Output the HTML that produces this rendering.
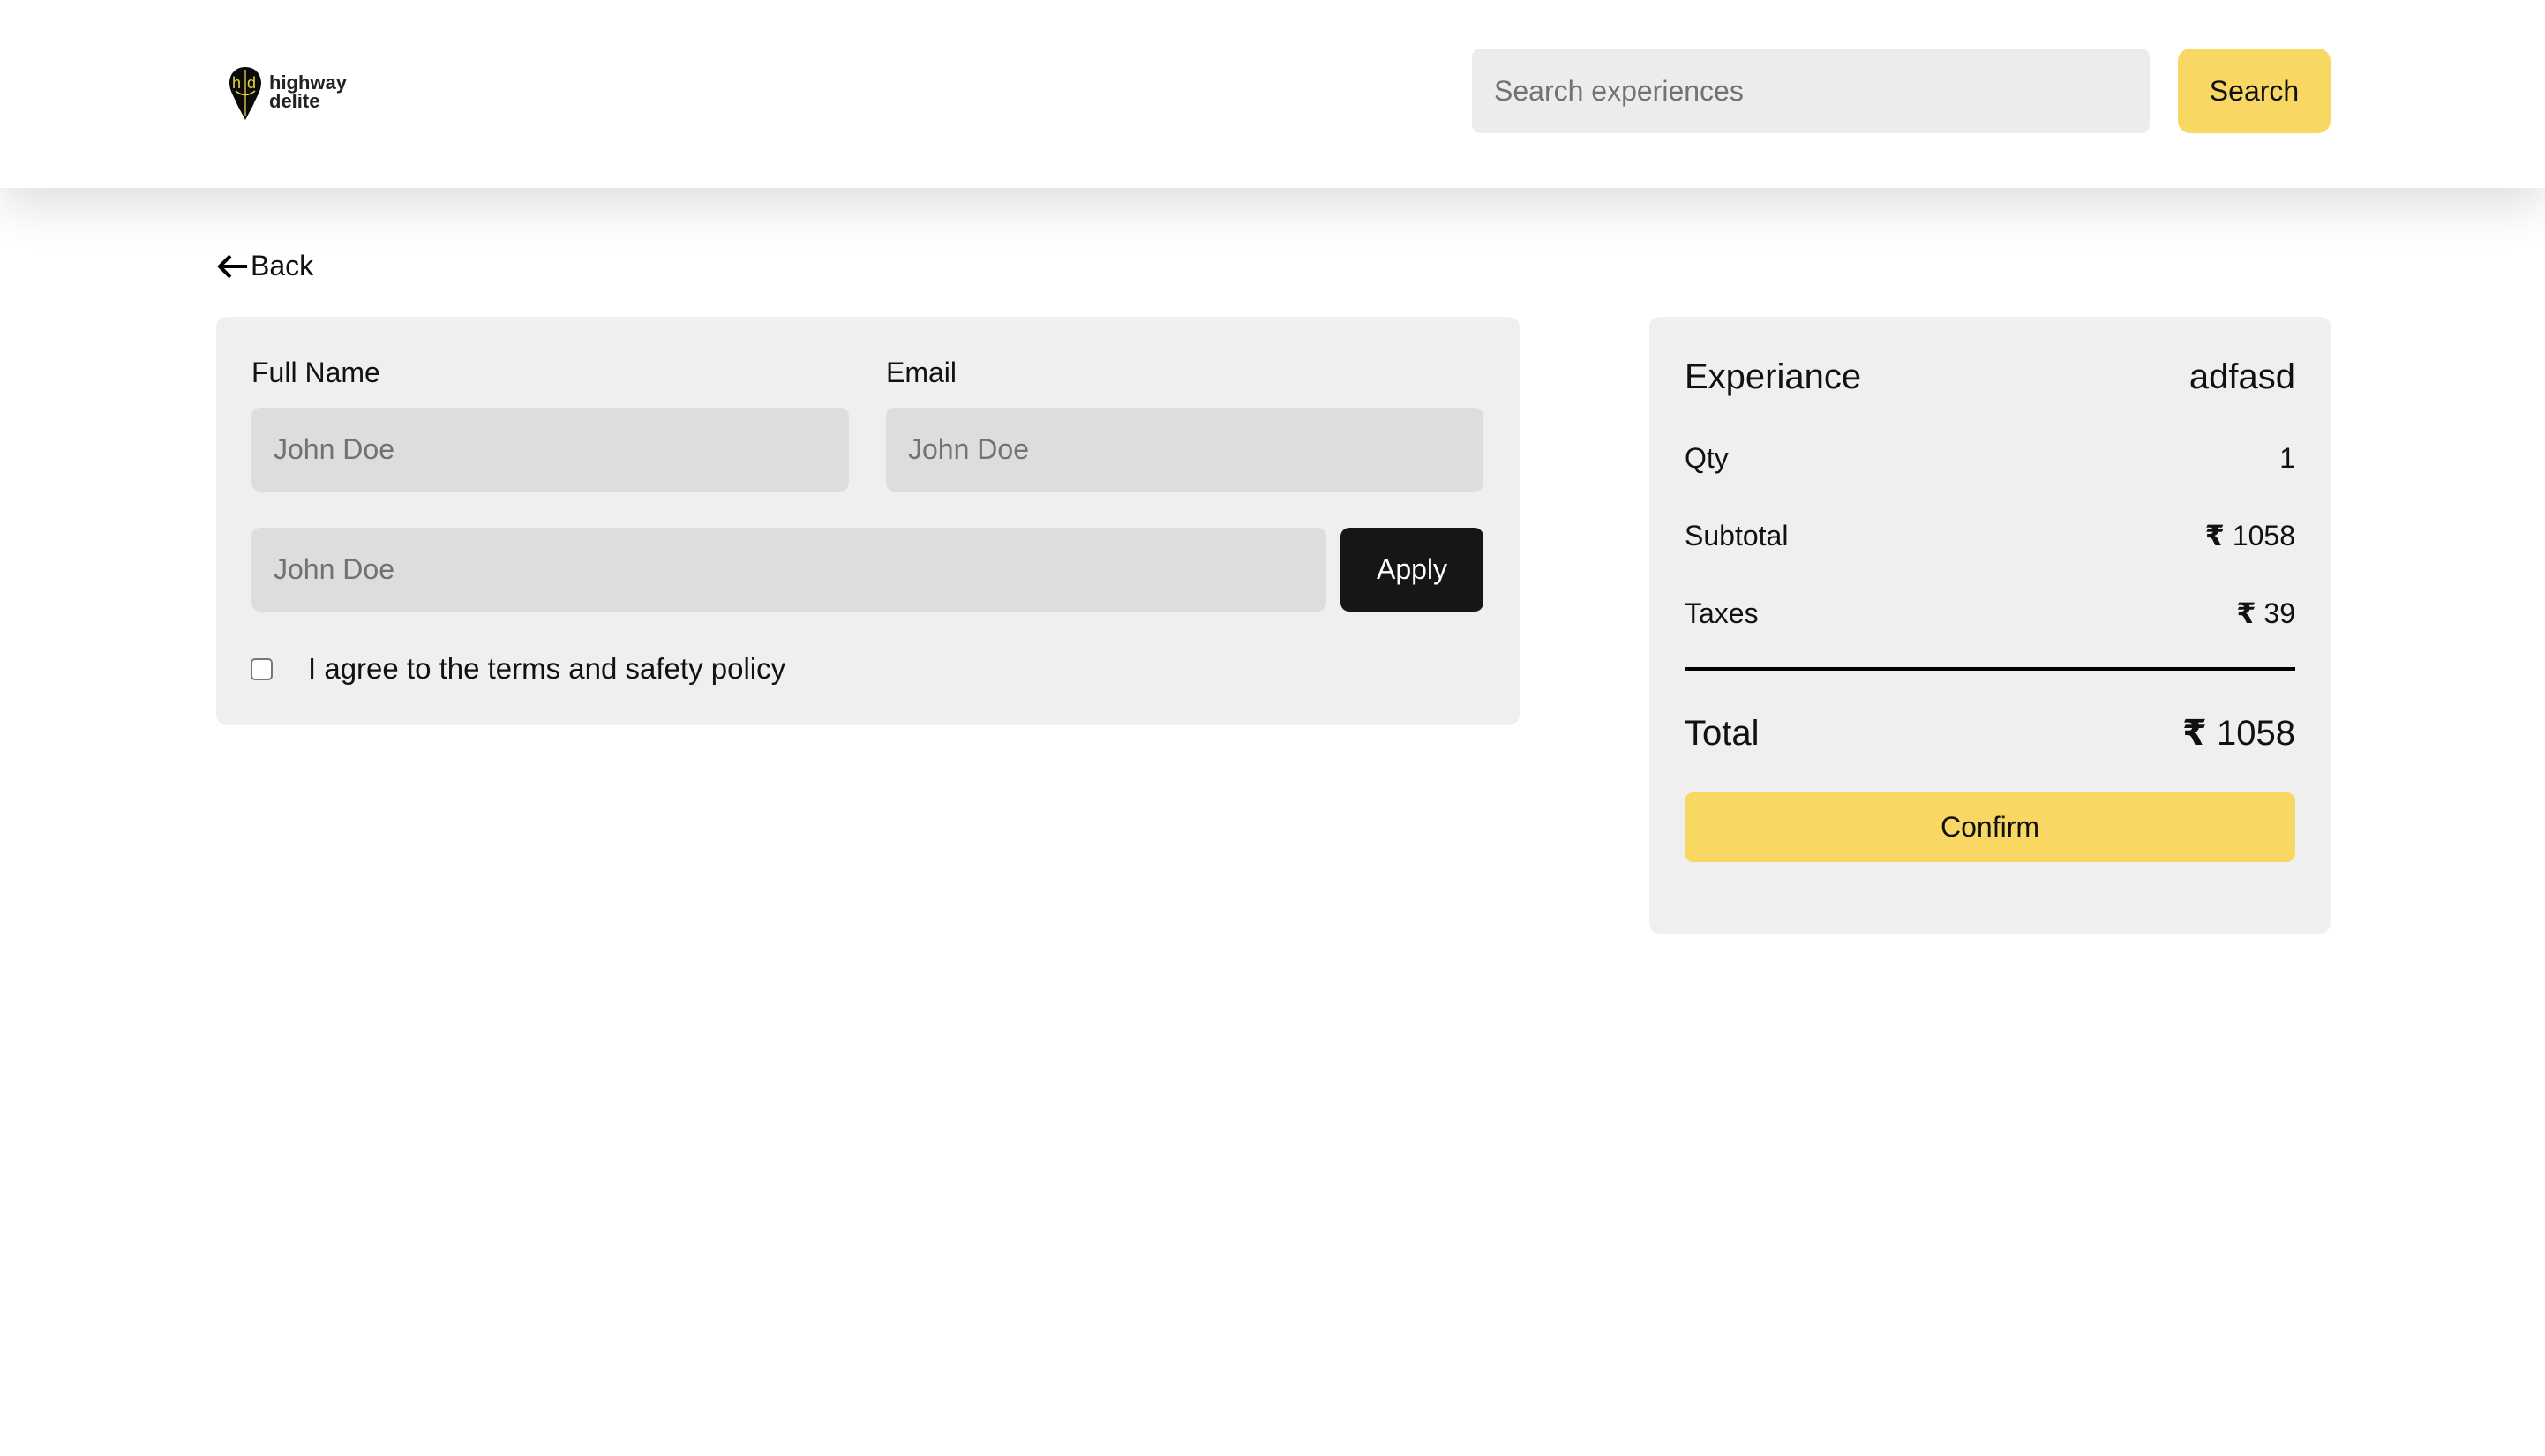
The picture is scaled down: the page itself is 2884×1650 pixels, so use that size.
<!DOCTYPE html>
<html><head><meta charset="utf-8"><style>
*{margin:0;padding:0;box-sizing:border-box}
body{width:2884px;height:1650px;background:#fff;font-family:"Liberation Sans","DejaVu Sans",sans-serif;color:#111;position:relative;overflow:hidden}
.abs{position:absolute}
.hdr{left:0;top:0;width:2884px;height:213px;background:#fff;box-shadow:0 20px 50px rgba(0,0,0,0.13);z-index:2}
.inp{background:#dddddd;border-radius:10px;color:#727272;font-size:32px;padding-left:25px;display:flex;align-items:center}
.lbl{font-size:32px;color:#111}
.row{left:1909px;width:692px;display:flex;justify-content:space-between;font-size:32px;align-items:center}
.r{font-weight:bold}
</style></head><body>
<div class="abs hdr">
  <svg class="abs" style="left:258px;top:75px" width="40" height="62" viewBox="0 0 40 62">
    <path d="M20 1C9 1 2 9 2 19c0 9 6 17 9 25l9 17 9-17c3-8 9-16 9-25C38 9 31 1 20 1z" fill="#0a0a0a"/>
    <line x1="20" y1="4" x2="20" y2="56" stroke="#c9b93a" stroke-width="1.5"/>
    <text x="5" y="25" font-size="18" fill="#e6d53f" font-family="Liberation Sans">h</text>
    <text x="22" y="25" font-size="18" fill="#e6d53f" font-family="Liberation Sans">d</text>
    <path d="M9 28q11 9 22 0" stroke="#e6d53f" stroke-width="1.5" fill="none"/>
  </svg>
  <div class="abs" style="left:305px;top:83px;font-size:22px;line-height:21px;font-weight:600;color:#222">highway<br>delite</div>
  <div class="abs inp" style="left:1668px;top:55px;width:768px;height:96px;background:#ececec">Search experiences</div>
  <div class="abs" style="left:2468px;top:55px;width:173px;height:96px;background:#f8d762;border-radius:14px;font-size:32px;display:flex;align-items:center;justify-content:center;color:#111">Search</div>
</div>
<div class="abs" style="left:246px;top:283px;font-size:32px;display:flex;align-items:center">
  <svg width="36" height="30" viewBox="0 0 36 30"><path d="M34 15H4M15 3L3 15l12 12" stroke="#000" stroke-width="4" fill="none"/></svg><span style="margin-left:2px">Back</span>
</div>
<div class="abs" style="left:245px;top:359px;width:1477px;height:463px;background:#efefef;border-radius:12px"></div>
<div class="abs lbl" style="left:285px;top:404px">Full Name</div>
<div class="abs lbl" style="left:1004px;top:404px">Email</div>
<div class="abs inp" style="left:285px;top:462px;width:677px;height:95px">John Doe</div>
<div class="abs inp" style="left:1004px;top:462px;width:677px;height:95px">John Doe</div>
<div class="abs inp" style="left:285px;top:598px;width:1218px;height:95px">John Doe</div>
<div class="abs" style="left:1519px;top:598px;width:162px;height:95px;background:#161616;border-radius:10px;color:#fff;font-size:32px;display:flex;align-items:center;justify-content:center">Apply</div>
<div class="abs" style="left:284px;top:746px;width:25px;height:25px;border:2px solid #777;border-radius:5px;background:#fff"></div>
<div class="abs" style="left:349px;top:739px;font-size:33px">I agree to the terms and safety policy</div>
<div class="abs" style="left:1869px;top:359px;width:772px;height:699px;background:#efefef;border-radius:12px"></div>
<div class="abs row" style="top:403px;font-size:40px;height:48px"><span>Experiance</span><span>adfasd</span></div>
<div class="abs row" style="top:500px;height:38px"><span>Qty</span><span>1</span></div>
<div class="abs row" style="top:588px;height:38px"><span>Subtotal</span><span><span class="r">₹</span> 1058</span></div>
<div class="abs row" style="top:676px;height:38px"><span>Taxes</span><span><span class="r">₹</span> 39</span></div>
<div class="abs" style="left:1909px;top:756px;width:692px;height:4px;background:#000"></div>
<div class="abs row" style="top:806px;font-size:40px;height:50px"><span>Total</span><span><span class="r">₹</span> 1058</span></div>
<div class="abs" style="left:1909px;top:898px;width:692px;height:79px;background:#f8d762;border-radius:10px;font-size:32px;display:flex;align-items:center;justify-content:center">Confirm</div>
</body></html>
